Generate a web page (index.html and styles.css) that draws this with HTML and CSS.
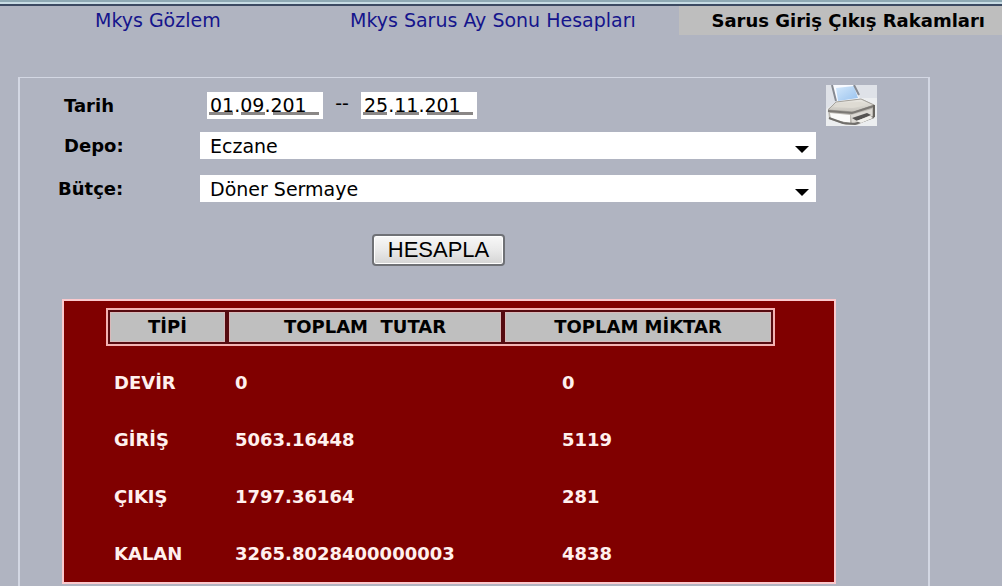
FILE: index.html
```html
<!DOCTYPE html>
<html lang="tr">
<head>
<meta charset="utf-8">
<title>Sarus Giriş Çıkış Rakamları</title>
<link rel="stylesheet" href="styles.css">
</head>
<body>
<nav class="tabs">
  <a class="tab tab-first" href="#gozlem">Mkys Gözlem</a>
  <a class="tab tab-middle" href="#aysonu">Mkys Sarus Ay Sonu Hesapları</a>
  <a class="tab tab-active" href="#rakamlar" aria-current="page">Sarus Giriş Çıkış Rakamları</a>
</nav>
<main class="panel">
  <form class="form">
    <div class="row row-dates">
      <label class="label" for="start">Tarih</label>
      <div class="dates">
        <input class="date" id="start" type="text" value="01.09.201">
        <span class="dash">--</span>
        <input class="date" id="end" type="text" value="25.11.201" aria-label="Bitiş tarihi">
      </div>
      <button class="print" type="button" aria-label="Yazdır">
        <svg class="printer" viewBox="0 0 51 41" width="51" height="41" aria-hidden="true">
          <defs>
            <linearGradient id="paper" x1="0" y1="0" x2="1" y2="1"><stop offset="0" stop-color="#d4e8fb"/><stop offset="1" stop-color="#98c2ee"/></linearGradient>
            <linearGradient id="top" x1="0" y1="0" x2="0" y2="1"><stop offset="0" stop-color="#eceae4"/><stop offset="1" stop-color="#c5c2bb"/></linearGradient>
          </defs>
          <rect width="51" height="41" fill="#eceef0"/>
          <path d="M0 0H6L10 17L0 24ZM29 0H51V13L34 13Z" fill="#dfe2e8"/>
          <path d="M2 24L10 17L36 14L49 20V32L31 40H20L3 34Z" fill="#bcb9b3"/>
          <path d="M6 0L10 16L33 14L28 0Z" fill="#f8faff"/>
          <path d="M10 3L28 1L32 13L12 16Z" fill="url(#paper)"/>
          <path d="M6 0L10 16M28 0L33 10" fill="none" stroke="#868a92" stroke-width="2"/>
          <path d="M2 25L10 17L35 14L48 20L28 27Z" fill="url(#top)" stroke="#a5a29c"/>
          <path d="M7 22L14 18L34 17L41 20L27 23Z" fill="#dedbd3"/>
          <path d="M2 26L26 28L48 21" fill="none" stroke="#7c7975" stroke-width="2"/>
          <path d="M4 28L24 30V38L5 34Z" fill="#fbfbfa"/>
          <path d="M25 30L46 24V31L26 38Z" fill="#dcd9d4"/>
          <path d="M3 33L17 38L29 39L48 32" fill="none" stroke="#706e6b" stroke-width="2"/>
          <path d="M26 33L41 28L45 30L31 36Z" fill="#555352"/>
          <path d="M30 36L44 31L47 33L35 38Z" fill="#f1f0ec"/>
          <path d="M48 20V32" stroke="#67645f" stroke-width="2"/>
        </svg>
      </button>
    </div>
    <div class="row">
      <label class="label" for="depo">Depo:</label>
      <span class="select-box"><select class="select" id="depo"><option>Eczane</option></select></span>
    </div>
    <div class="row row-budget">
      <label class="label label-wide" for="butce">Bütçe:</label>
      <span class="select-box"><select class="select" id="butce"><option>Döner Sermaye</option></select></span>
    </div>
    <div class="actions"><button class="submit" type="button">HESAPLA</button></div>
  </form>
  <section class="results">
    <table class="table">
      <thead>
        <tr>
          <th class="col-type" scope="col"><span class="head">TİPİ</span></th>
          <th class="col-total" scope="col"><span class="head">TOPLAM&nbsp; TUTAR</span></th>
          <th class="col-count" scope="col"><span class="head">TOPLAM MİKTAR</span></th>
        </tr>
      </thead>
      <tbody>
        <tr><td>DEVİR</td><td>0</td><td>0</td></tr>
        <tr><td>GİRİŞ</td><td>5063.16448</td><td>5119</td></tr>
        <tr><td>ÇIKIŞ</td><td>1797.36164</td><td>281</td></tr>
        <tr><td>KALAN</td><td>3265.8028400000003</td><td>4838</td></tr>
      </tbody>
    </table>
  </section>
</main>
</body>
</html>
```
FILE: styles.css
```css
* { box-sizing: border-box; }

body {
  display: flex;
  flex-direction: column;
  min-height: 100vh;
  margin: 0;
  border-right: 2px solid #fff;
  background: #b0b4c1;
  color: #000;
  font-family: Verdana, "DejaVu Sans", sans-serif;
  font-size: 19px;
}

.tabs {
  display: flex;
  justify-content: flex-end;
  border-top: 6px solid #44546c;
  border-image: linear-gradient(#8fa9b4 0 2px, #c8dce4 2px 4px, #3c4a62 4px) 6 0 0 0;
}

.tab {
  padding: 0 13px;
  line-height: 29px;
  color: #15158c;
  text-decoration: none;
  white-space: nowrap;
}

.tab-first { flex: 1; padding-left: 95px; }
.tab-middle { flex: 0 0 342px; }

.tab-active {
  flex: 0 0 323px;
  padding: 0 17px 0 0;
  background: #bebebe;
  color: #000;
  font-size: 18px;
  font-weight: bold;
  text-align: right;
}

.panel {
  flex: 1;
  margin: 42px 72px 0 18px;
  border: 2px solid #d3d7e3;
  border-top-width: 1px;
  border-bottom: 0;
}

.form { padding: 7px 112px 0 38px; }

.row {
  display: flex;
  align-items: center;
  margin-bottom: 6px;
}

.row-dates { margin-right: -61px; }
.row-budget { margin-top: 16px; }

.label {
  flex: 0 0 142px;
  padding-left: 6px;
  font-size: 18px;
  font-weight: bold;
}

.label-wide { padding-left: 0; }

.dates {
  display: flex;
  flex: 1;
  padding-left: 7px;
}

.date {
  width: 116px;
  height: 27px;
  padding: 0 3px 2px;
  border: 0;
  background:
    linear-gradient(90deg, #8a8786 24px, transparent 24px 32px, #8a8786 32px 56px, transparent 56px 64px, #8a8786 64px) 2px 20px / 110px 3px no-repeat
    #fff;
  color: #000;
  font: inherit;
}

.dash {
  width: 38px;
  text-align: center;
}

.print {
  padding: 0;
  border: 0;
  background: none;
}

.printer { display: block; }

.select-box {
  position: relative;
  flex: 1;
}

.select-box::after {
  position: absolute;
  right: 7px;
  bottom: 6px;
  border: 7px solid transparent;
  border-top-color: #000;
  border-bottom: 0;
  content: "";
  pointer-events: none;
}

.select {
  display: block;
  width: 100%;
  height: 27px;
  padding: 0 10px;
  appearance: none;
  border: 0;
  border-radius: 0;
  background: #fff;
  color: #000;
  font: inherit;
}

.actions { padding: 26px 0 0 314px; }

.submit {
  display: block;
  width: 133px;
  height: 32px;
  padding: 0;
  border: 2px solid #6f7176;
  border-radius: 4px;
  background: linear-gradient(#f8f8f8, #e9e9e9 50%, #d4d4d4);
  box-shadow: inset 0 0 0 1px #fff;
  color: #000;
  font-family: "Liberation Sans", Arial, sans-serif;
  font-size: 22px;
  line-height: 28px;
}

.results {
  margin: 33px 92px 0 42px;
  padding: 7px 59px 8px 42px;
  border: 2px solid #fbc9cd;
  background: #800000;
}

.table {
  width: 100%;
  table-layout: fixed;
  border-collapse: separate;
  border-spacing: 0;
  font-size: 18px;
  font-weight: bold;
}

.table th {
  padding: 2px;
  border: solid #f3b2b2;
  border-width: 2px 0;
  background: #560b10;
}

.table th:first-child { border-left-width: 2px; }
.table th:last-child { border-right-width: 2px; }
.col-type { width: 121px; }
.col-total { width: 276px; }

.head {
  display: block;
  border: 1px solid #d9b9b9;
  background: #bfbfbf;
  line-height: 28px;
}

.table td {
  height: 57px;
  padding: 16px 8px 0;
  color: #fff0ee;
}

.table td:last-child { padding-left: 59px; }
```
